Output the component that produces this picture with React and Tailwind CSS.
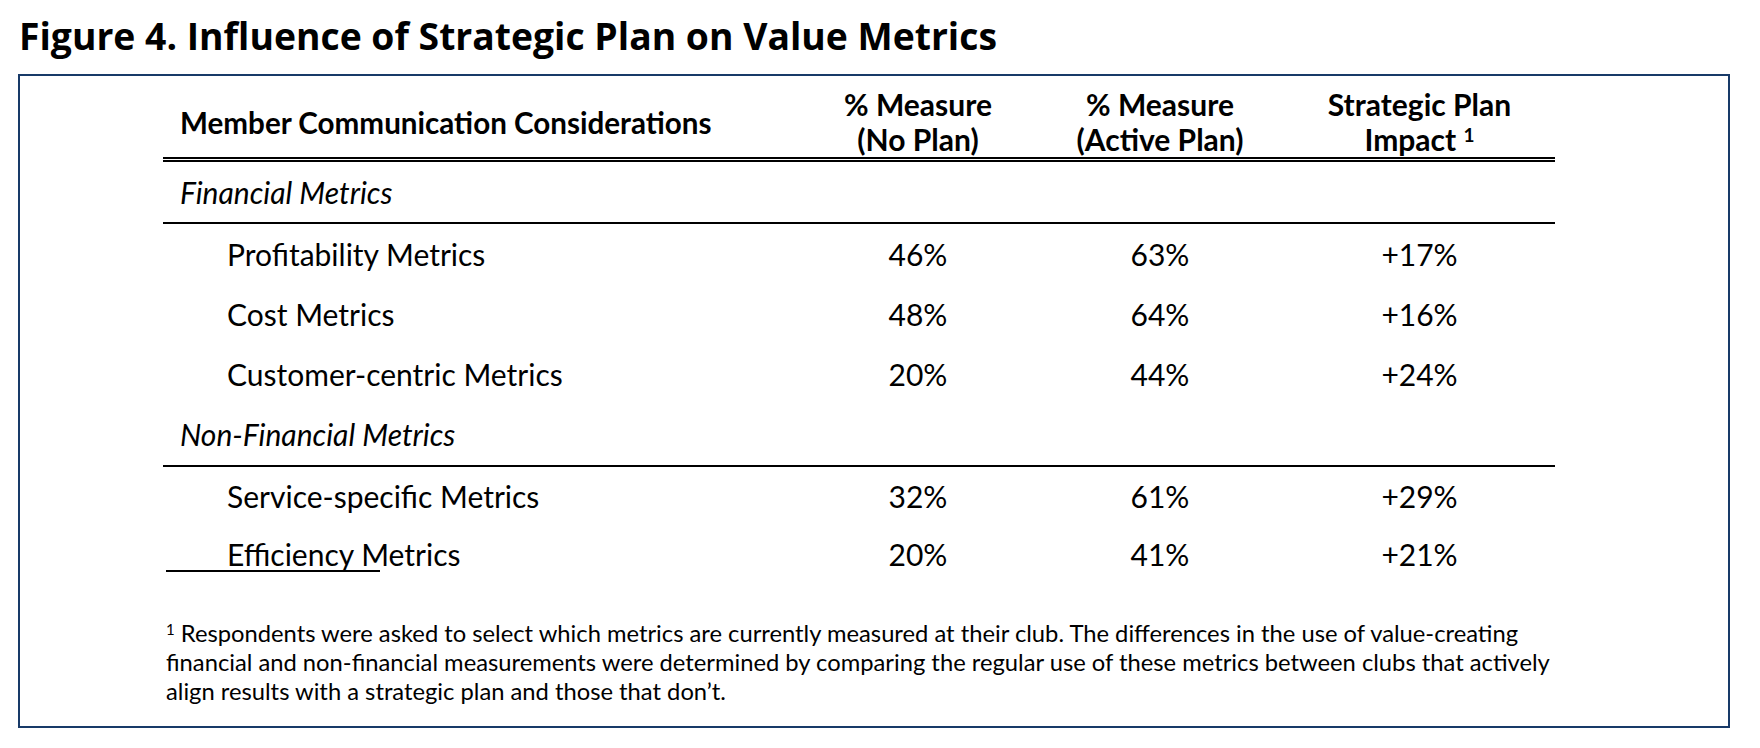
import React from "react";

const rows1 = [
  ["Profitability Metrics", "46%", "63%", "+17%"],
  ["Cost Metrics", "48%", "64%", "+16%"],
  ["Customer-centric Metrics", "20%", "44%", "+24%"],
];
const rows2 = [
  ["Service-specific Metrics", "32%", "61%", "+29%", "h-[58px]"],
  ["Efficiency Metrics", "20%", "41%", "+21%", "h-[58px]"],
];

function DataRow({ r, last }) {
  return (
    <div className={"grid grid-cols-[637px_236px_248px_271px] items-center text-[30px] text-black " + (r[4] || "h-[60px]")}>
      <div className="relative pl-[64px] h-full flex items-center">
        {r[0]}
        {last && <span className="absolute left-[3px] top-[45px] w-[214px] h-[2px] bg-black" />}
      </div>
      <div className="text-center">{r[1]}</div>
      <div className="text-center">{r[2]}</div>
      <div className="text-center">{r[3]}</div>
    </div>
  );
}

export default function App() {
  return (
    <div className="w-[1760px] h-[748px] bg-white overflow-hidden" style={{ fontFamily: "Lato, 'Open Sans', sans-serif" }}>
      <div className="h-[74px] pl-[19px] pt-[14px]">
        <h1 className="text-[37.3px] leading-[44px] font-bold text-black" style={{ fontFamily: "'Open Sans', 'Noto Sans', sans-serif" }}>
          Figure 4. Influence of Strategic Plan on Value Metrics
        </h1>
      </div>
      <div className="ml-[18px] w-[1712px] h-[654px] border-2 border-[#183a68]">
        <div className="ml-[143px] w-[1392px]">
          <div className="grid grid-cols-[637px_236px_248px_271px] items-center pt-[11px] border-b-[5px] border-double border-black text-[30px] leading-[35px] font-bold text-black">
            <div className="h-[70px] pl-[17px] flex items-center text-[29.6px]">Member Communication Considerations</div>
            <div className="text-center">% Measure<br />(No Plan)</div>
            <div className="text-center">% Measure<br />(Active Plan)</div>
            <div className="text-center">Strategic Plan<br />Impact <sup className="text-[19px]">1</sup></div>
          </div>
          <div className="h-[62px] pl-[17px] flex items-center italic text-[30px] text-black border-b-2 border-black">Financial Metrics</div>
          {rows1.map((r) => <DataRow key={r[0]} r={r} />)}
          <div className="h-[63px] pl-[17px] flex items-center italic text-[30px] text-black border-b-2 border-black">Non-Financial Metrics</div>
          {rows2.map((r, i) => <DataRow key={r[0]} r={r} last={i === 1} />)}
          <p className="mt-[36px] ml-[3px] text-[23.75px] leading-[29px] text-black">
            <sup className="text-[15px]">1</sup> Respondents were asked to select which metrics are currently measured at their club. The differences in the use of value-creating<br />
            financial and non-financial measurements were determined by comparing the regular use of these metrics between clubs that actively<br />
            align results with a strategic plan and those that don’t.
          </p>
        </div>
      </div>
    </div>
  );
}
